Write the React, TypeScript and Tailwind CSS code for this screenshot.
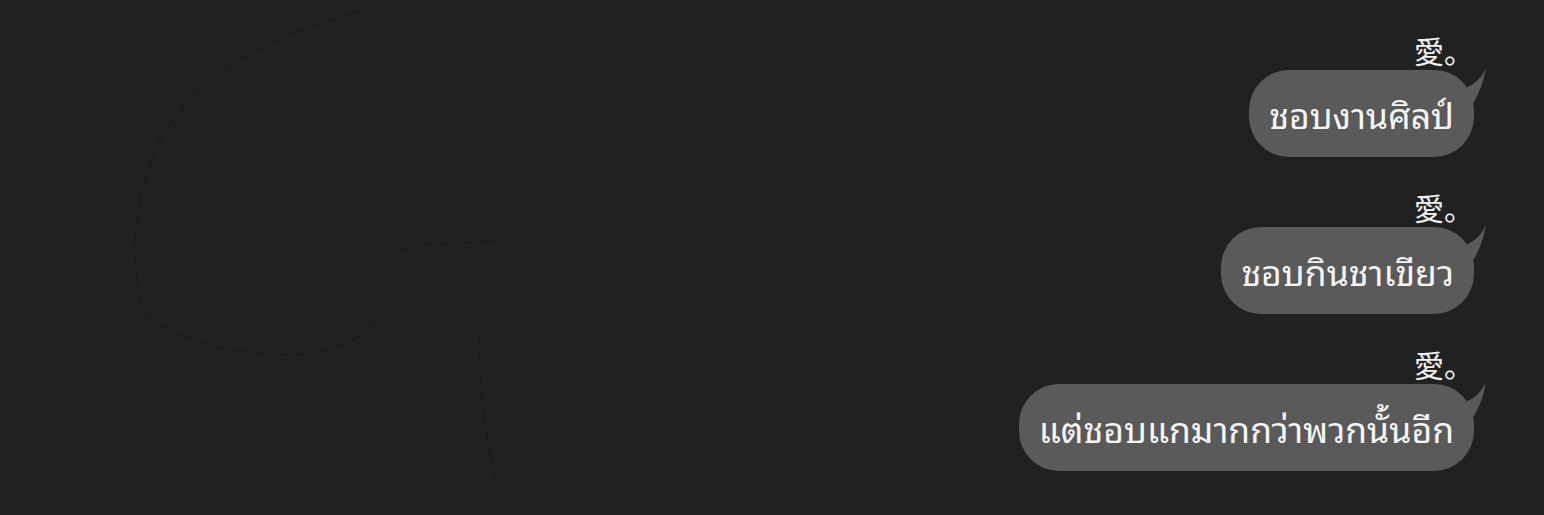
const messages = [
  { name: "愛。", text: "ชอบงานศิลป์" },
  { name: "愛。", text: "ชอบกินชาเขียว" },
  { name: "愛。", text: "แต่ชอบแกมากกว่าพวกนั้นอีก" },
];

function Tail() {
  return (
    <svg
      className="absolute left-[calc(100%-20px)] top-[-4px] w-[36px] h-[40px]"
      viewBox="0 0 36 40"
    >
      <path d="M4 24 Q24 20 32 2 Q29 20 20 36 L4 36 Z" fill="#5a5a5a" />
    </svg>
  );
}

function Bubble({ name, text }: { name: string; text: string }) {
  return (
    <div className="flex flex-col items-end">
      <div
        className="h-[35px] text-[30px] leading-[31px] text-[#f2f2f2]"
        style={{ fontFamily: '"Noto Sans CJK JP", "Noto Sans CJK SC", sans-serif' }}
      >
        {name}
      </div>
      <div className="relative">
        <div
          className="h-[87px] flex items-center px-5 rounded-[40px] bg-[#5a5a5a] text-[35.5px] text-[#f5f5f5]"
          style={{ fontFamily: '"Noto Sans Thai Looped", "Noto Sans Thai", "Noto Sans", sans-serif' }}
        >
          {text}
        </div>
        <Tail />
      </div>
    </div>
  );
}

export default function App() {
  return (
    <div className="relative w-[1544px] h-[515px] overflow-hidden bg-[#212121]">
      {/* faint sketch in the background */}
      <svg className="absolute left-0 top-0" width="700" height="515" viewBox="0 0 700 515">
        <g fill="none" stroke="#1d1d1d" strokeWidth="2" strokeDasharray="14 6">
          <path d="M360 12 C280 30 200 70 160 140 C135 190 130 260 140 300 C150 330 200 350 280 355 C330 356 360 340 380 320" />
          <path d="M400 250 C440 240 470 245 500 240" />
          <path d="M480 330 C478 380 484 440 500 490" />
        </g>
      </svg>
      <div className="relative flex flex-col items-end gap-[35px] pt-[35px] pr-[70px]">
        {messages.map((m, i) => (
          <Bubble key={i} name={m.name} text={m.text} />
        ))}
      </div>
    </div>
  );
}
